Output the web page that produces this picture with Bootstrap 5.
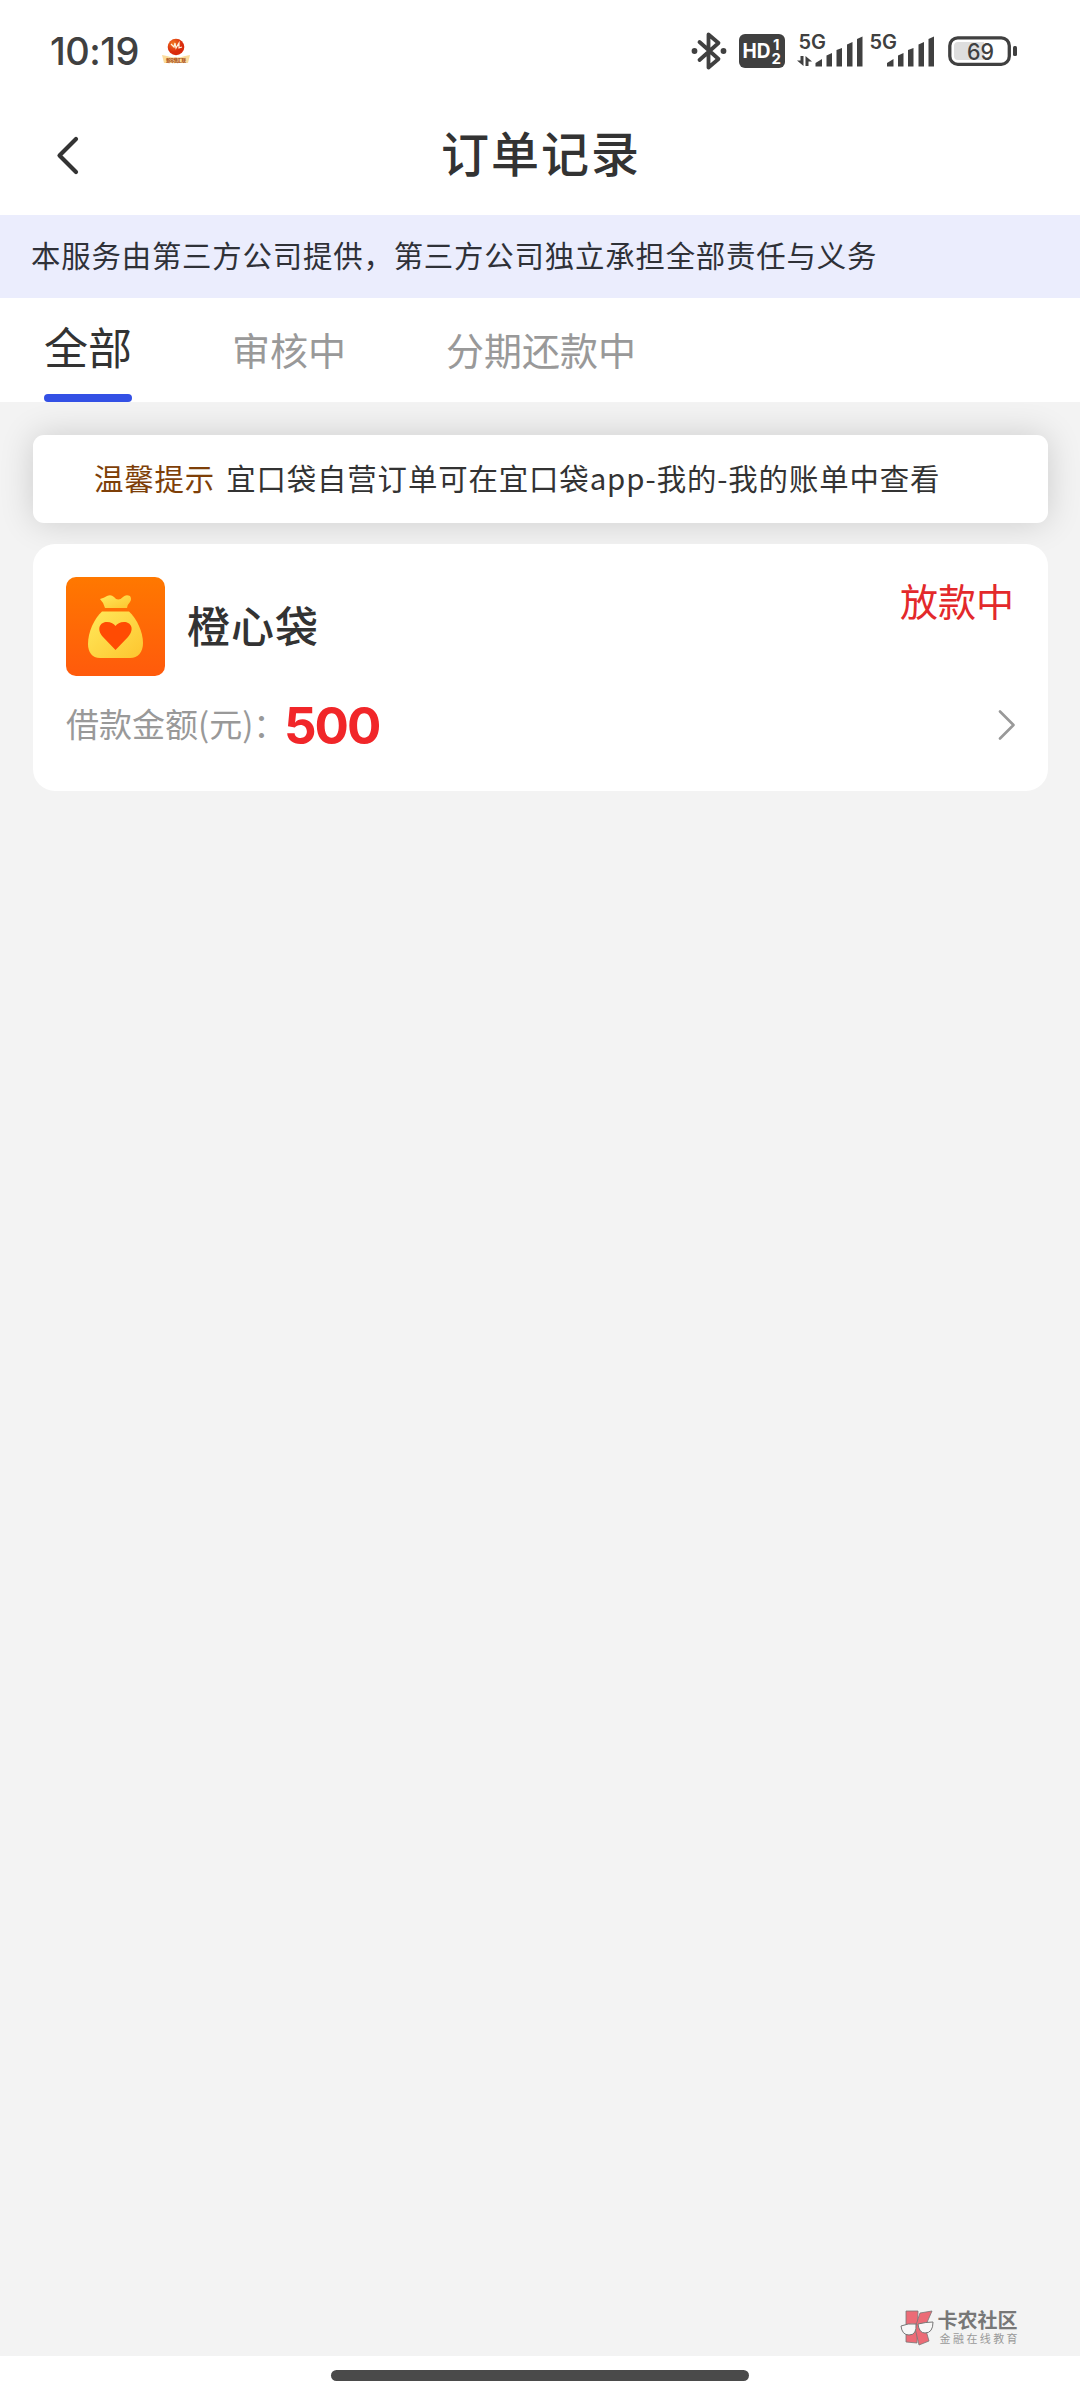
<!DOCTYPE html>
<html lang="zh-CN">
<head>
<meta charset="utf-8">
<meta name="viewport" content="width=device-width, initial-scale=1">
<title>订单记录</title>
<link href="https://cdn.jsdelivr.net/npm/bootstrap@5.3.0/dist/css/bootstrap.min.css" rel="stylesheet">
<style>
  body { font-family: "Noto Sans CJK SC", sans-serif; color: #333; background: #f3f3f3; line-height: 1; }
  svg { display: block; flex: none; }
  svg text { font-family: Inter, sans-serif; }
  .screen { width: 1080px; height: 2400px; overflow: hidden; }
  .status-bar { height: 102px; padding: 0 63px 0 50px; }
  .clock { font: 500 38px/1 Inter, sans-serif; color: #404040; width: 88px; white-space: nowrap; letter-spacing: -.5px; }
  .title-bar { height: 113px; padding: 0 56px 8px; }
  .page-title { font-size: 48px; font-weight: 500; letter-spacing: 2px; line-height: 1; padding-bottom: 8px; margin-left: 2px; }
  .title-side { width: 24px; }
  .disclaimer { height: 83px; background: #ebedfd; padding: 0 31px 3px; font-size: 29.4px; letter-spacing: .83px; color: #2f3138; }
  .order-tabs { height: 104px; gap: 100px; padding-left: 44px; }
  .order-tabs .nav-link { padding: 0; font-size: 38px; color: #999; height: 104px; line-height: 102px; }
  .order-tabs .nav-link.active { font-size: 44px; color: #333; line-height: 97px; border-bottom: 0; }
  .order-tabs .nav-link.active::after { content: ""; display: block; height: 8px; border-radius: 4px; background: #3350e5; margin-top: -1px; }
  .content-area { padding: 33px 32px 0 33px; }
  .tip-card { height: 88px; border: 0; border-radius: 11px; padding: 0 0 3px 61px; font-size: 29.4px; letter-spacing: .9px; box-shadow: 0 0 34px rgba(0,0,0,.16); }
  .tip-label { color: #7e3f08; margin-right: 11px; }
  .order-card { height: 247px; margin-top: 21px; border: 0; border-radius: 22px; padding: 33px 33px 0; }
  .order-name { font-size: 43px; font-weight: 500; letter-spacing: 1px; margin-left: 22px; padding-bottom: 5px; }
  .order-state { font-size: 38px; color: #e3292b; margin: 4px 1px 0 0; }
  .amount-row { height: 98px; }
  .amount-label { font-size: 33px; color: #999; width: 218px; padding-bottom: 4px; }
  .amount { font: 700 51px/1 Inter, sans-serif; color: #f12629; letter-spacing: -2px; }
  .brand-mark { padding: 0 60px 10px 0; }
  .brand-name { font-size: 20px; font-weight: 700; color: #777; line-height: 20px; }
  .brand-sub { font-size: 11px; color: #999; letter-spacing: 2.4px; line-height: 12px; padding-left: 2px; margin-top: 2px; white-space: nowrap; }
  .home-area { height: 44px; }
  .home-bar { width: 418px; height: 11px; border-radius: 6px; background: #4a4a4a; margin-top: 14px; }
</style>
</head>
<body>
<div class="screen d-flex flex-column">
  <header class="bg-white">
    <div class="status-bar d-flex align-items-center">
      <div class="clock">10:19</div>
      <svg class="ms-4" width="28" height="28" viewBox="0 0 28 28">
        <defs><radialGradient id="ball" cx=".35" cy=".3"><stop offset="0" stop-color="#f27a20"/><stop offset="1" stop-color="#d92a0c"/></radialGradient></defs>
        <path d="M0 18L5 19Q14 22 23 19L28 18L26 26H2Z" fill="#fbdc9c"/>
        <circle cx="14" cy="10" r="8.300" fill="url(#ball)"/>
        <path d="M9 7l3 3 1-4 1 5 3-5v5l3-1" fill="none" stroke="#fff3df" stroke-width="1.200"/>
        <text x="4" y="25" font-size="4.600" font-weight="700" fill="#a4420d" textLength="20" style="font-family:'Noto Sans CJK SC'">新零售汇联</text>
      </svg>
      <svg class="ms-auto" width="326" height="42" viewBox="691 30 326 42">
        <g fill="none" stroke="#404040" stroke-width="3.800" stroke-linejoin="round" stroke-linecap="round">
          <path d="M699.500 42L718.500 59L708.500 67.500V34.500L718.500 43L699.500 60"/>
          <rect x="949.800" y="37.800" width="59.500" height="26.500" rx="8" stroke-width="3.300"/>
        </g>
        <circle cx="694.500" cy="51" r="2.900" fill="#404040"/><circle cx="723.500" cy="51" r="2.900" fill="#404040"/>
        <rect x="739" y="34" width="46" height="34" rx="6" fill="#404040"/>
        <g fill="#fff" font-weight="700">
          <text x="742.500" y="58" font-size="20" textLength="28" lengthAdjust="spacingAndGlyphs">HD</text>
          <text x="773" y="49.500" font-size="15">1</text>
          <text x="771.500" y="64" font-size="15">2</text>
        </g>
        <g fill="#404040">
          <text x="798.500" y="48.500" font-size="19.500" font-weight="600" textLength="27.500" lengthAdjust="spacingAndGlyphs">5G</text>
          <text x="869.500" y="48.500" font-size="19.500" font-weight="600" textLength="27.500" lengthAdjust="spacingAndGlyphs">5G</text>
          <path d="M803.500 56V66L797 60.500H800.500V56ZM805.500 66V56L812 61.500H808.500V66Z"/>
          <g id="bars"><path d="M815.500 66.500V63L822 59V66.500Z"/><path d="M826.500 66.500V55.500L832 53V66.500Z"/><path d="M836.500 66.500V50L842 48V66.500Z"/><path d="M847 66.500V44.500L852.500 42V66.500Z"/><path d="M857 66.500V39L862.500 36.500V66.500Z"/></g>
          <use href="#bars" x="71.500"/>
          <rect x="1013" y="46" width="4" height="10" rx="1.500"/>
          <path d="M958 42H984V60H958Q954 60 954 56V46Q954 42 958 42Z" fill="#dedede"/>
          <text x="967" y="59.500" font-size="23.500" font-weight="500" textLength="27" lengthAdjust="spacingAndGlyphs">69</text>
        </g>
      </svg>
    </div>
    <div class="title-bar d-flex align-items-center justify-content-between">
      <svg class="title-side" width="24" height="40" viewBox="56 135 24 40"><path d="M76 139L59.500 155.500L76 172" fill="none" stroke="#333" stroke-width="4.200" stroke-linecap="round" stroke-linejoin="round"/></svg>
      <h1 class="page-title mb-0">订单记录</h1>
      <div class="title-side"></div>
    </div>
  </header>
  <div class="disclaimer d-flex align-items-center text-nowrap">本服务由第三方公司提供，第三方公司独立承担全部责任与义务</div>
  <nav class="nav order-tabs bg-white flex-nowrap">
    <a class="nav-link active" href="#">全部</a>
    <a class="nav-link" href="#">审核中</a>
    <a class="nav-link" href="#">分期还款中</a>
  </nav>
  <main class="content-area flex-grow-1">
    <div class="card tip-card flex-row align-items-center text-nowrap"><span class="tip-label">温馨提示</span><span>宜口袋自营订单可在宜口袋app-我的-我的账单中查看</span></div>
    <div class="card order-card">
      <div class="d-flex align-items-start justify-content-between">
        <div class="d-flex align-items-center">
          <svg width="99" height="99" viewBox="0 0 99 99">
            <defs>
              <linearGradient id="tile" x1="0" y1="0" x2="0" y2="1"><stop offset="0" stop-color="#ff7800"/><stop offset="1" stop-color="#ff5a0c"/></linearGradient>
              <linearGradient id="bag" x1="0" y1="0" x2="1" y2="1"><stop offset="0" stop-color="#ffe95a"/><stop offset="1" stop-color="#fdc52f"/></linearGradient>
            </defs>
            <rect width="99" height="99" rx="10" fill="url(#tile)"/>
            <path d="M34 22Q38 21 41 19Q45 17 48 20Q52 25 57 20Q60 17 64 19Q66 22 64 25Q61 28 61 31H39Q38 26 34 22Z" fill="url(#bag)"/>
            <path d="M36 34.500H63C71 42 77 55 77 66C77 75 72 81 64 81H34C26 81 22 75 22 67C22 55 28 42 36 34.500Z" fill="url(#bag)"/>
            <path d="M49.500 73L37 60C30 52 34 45 41 45C45 45 48 47 49.500 49C51 47 54 45 58 45C65 45 69 52 62 60Z" fill="#ff4b03"/>
          </svg>
          <div class="order-name">橙心袋</div>
        </div>
        <div class="order-state">放款中</div>
      </div>
      <div class="amount-row d-flex align-items-center">
        <span class="amount-label text-nowrap">借款金额(元)：</span><span class="amount">500</span>
        <svg class="ms-auto" width="18" height="32" viewBox="0 0 18 32"><path d="M3 2.500L16.500 16L3 29.500" fill="none" stroke="#999" stroke-width="2.600" stroke-linecap="round" stroke-linejoin="round"/></svg>
      </div>
    </div>
  </main>
  <div class="brand-mark d-flex justify-content-end">
    <svg width="34" height="36" viewBox="0 0 34 36">
      <g fill="#ec6b76" stroke="#777" stroke-width=".8"><path d="M6 1H18L17 33L6 32Z"/><path d="M20 3L32 1L25 17L29 31L19 35L15 18Z"/></g>
      <g fill="#f7f7f7" stroke="#777"><path d="M1 16Q8 13 16 14Q17 25 9 25Q2 25 1 16Z"/><path d="M18 14Q26 12 33 12Q33 23 25 23Q19 23 18 14Z"/></g>
    </svg>
    <div class="ps-1"><div class="brand-name">卡农社区</div><div class="brand-sub">金融在线教育</div></div>
  </div>
  <footer class="home-area bg-white d-flex justify-content-center"><div class="home-bar"></div></footer>
</div>
<script src="https://cdn.jsdelivr.net/npm/bootstrap@5.3.0/dist/js/bootstrap.bundle.min.js"></script>
</body>
</html>
